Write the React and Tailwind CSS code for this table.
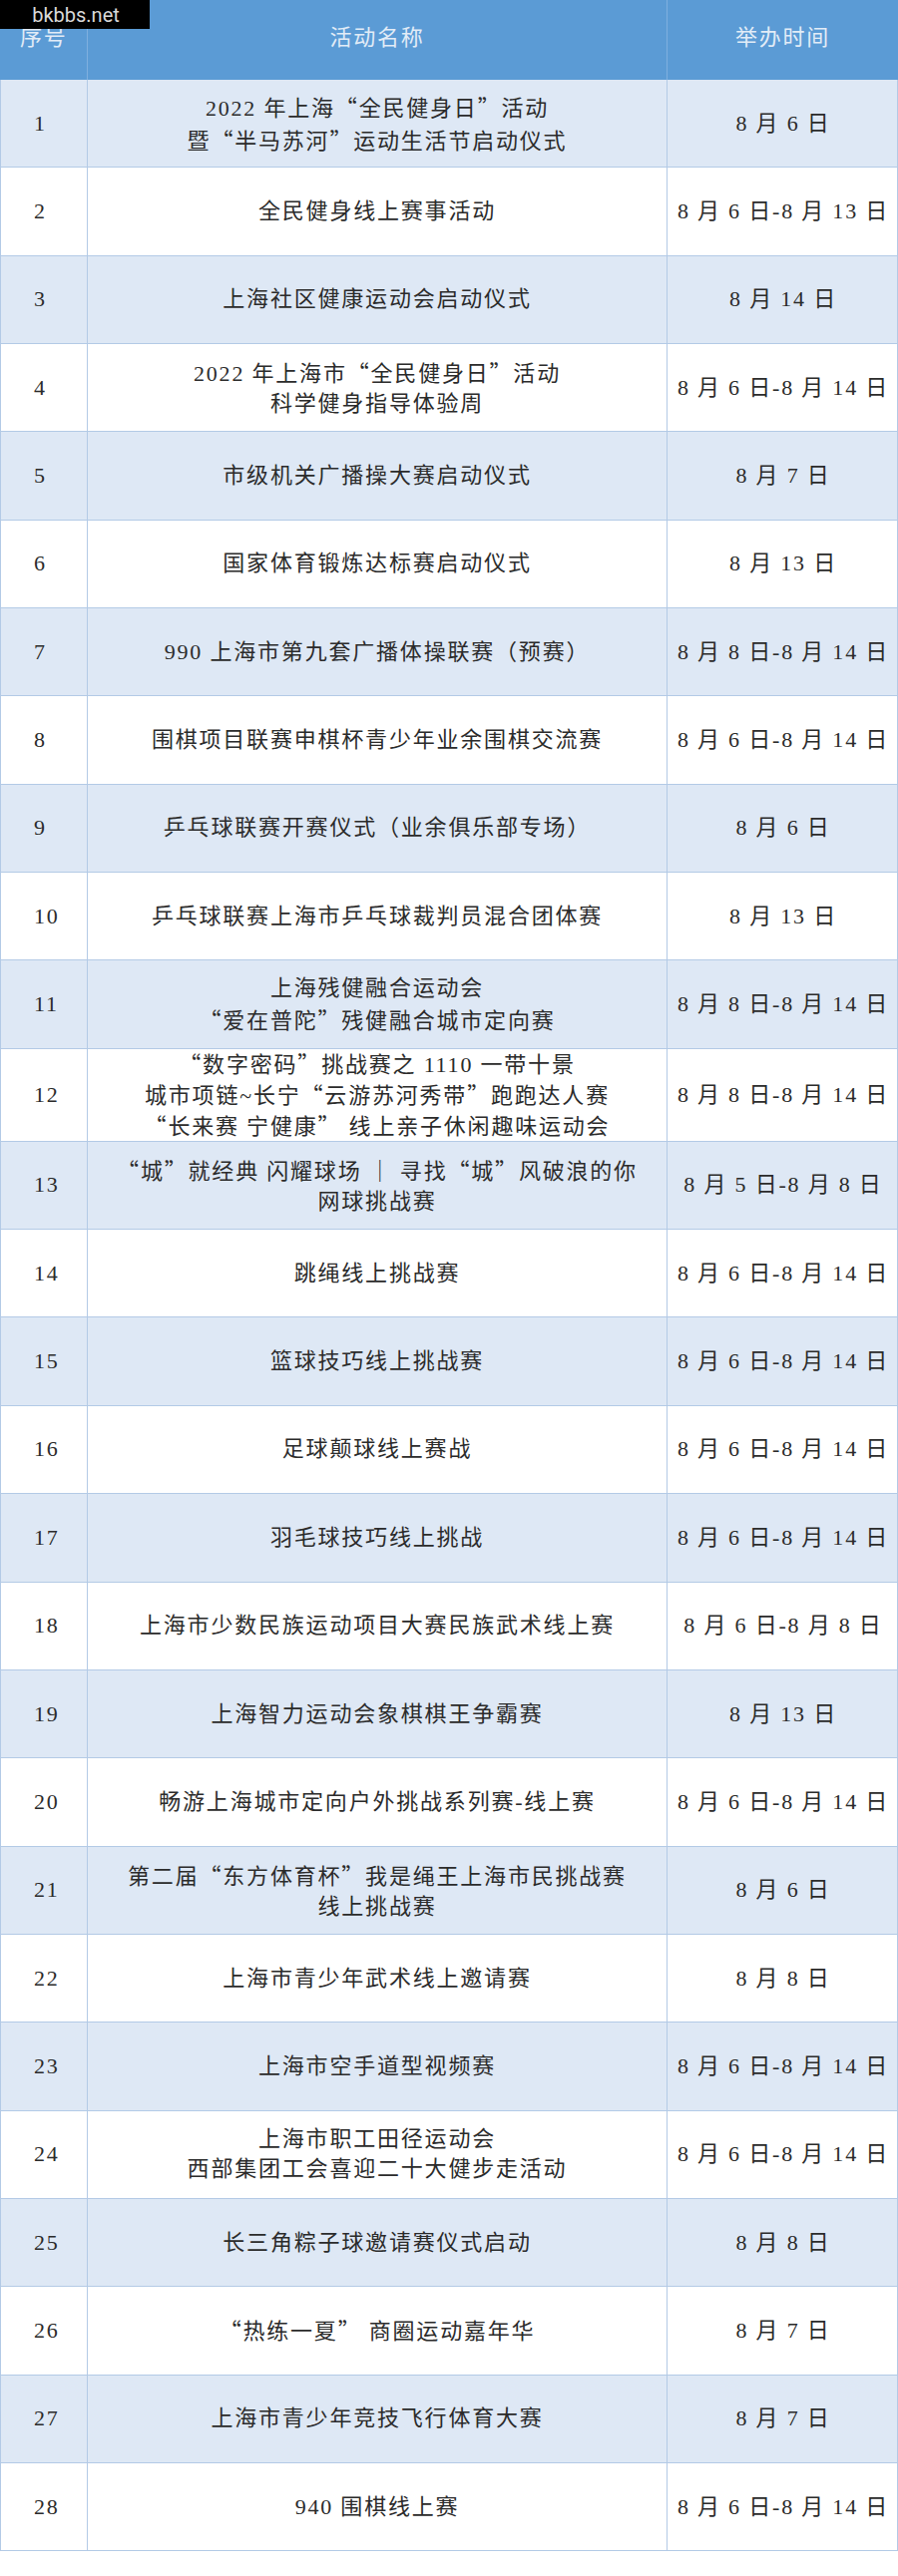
import React from "react";

const rows = [
  [["2022 年上海“全民健身日”活动", "暨“半马苏河”运动生活节启动仪式"], "8 月 6 日"],
  [["全民健身线上赛事活动"], "8 月 6 日-8 月 13 日"],
  [["上海社区健康运动会启动仪式"], "8 月 14 日"],
  [["2022 年上海市“全民健身日”活动", "科学健身指导体验周"], "8 月 6 日-8 月 14 日"],
  [["市级机关广播操大赛启动仪式"], "8 月 7 日"],
  [["国家体育锻炼达标赛启动仪式"], "8 月 13 日"],
  [["990 上海市第九套广播体操联赛（预赛）"], "8 月 8 日-8 月 14 日"],
  [["围棋项目联赛申棋杯青少年业余围棋交流赛"], "8 月 6 日-8 月 14 日"],
  [["乒乓球联赛开赛仪式（业余俱乐部专场）"], "8 月 6 日"],
  [["乒乓球联赛上海市乒乓球裁判员混合团体赛"], "8 月 13 日"],
  [["上海残健融合运动会", "“爱在普陀”残健融合城市定向赛"], "8 月 8 日-8 月 14 日"],
  [
    ["“数字密码”挑战赛之 1110 一带十景", "城市项链~长宁“云游苏河秀带”跑跑达人赛", "“长来赛 宁健康” 线上亲子休闲趣味运动会"],
    "8 月 8 日-8 月 14 日",
  ],
  [["“城”就经典 闪耀球场 ｜ 寻找“城”风破浪的你", "网球挑战赛"], "8 月 5 日-8 月 8 日"],
  [["跳绳线上挑战赛"], "8 月 6 日-8 月 14 日"],
  [["篮球技巧线上挑战赛"], "8 月 6 日-8 月 14 日"],
  [["足球颠球线上赛战"], "8 月 6 日-8 月 14 日"],
  [["羽毛球技巧线上挑战"], "8 月 6 日-8 月 14 日"],
  [["上海市少数民族运动项目大赛民族武术线上赛"], "8 月 6 日-8 月 8 日"],
  [["上海智力运动会象棋棋王争霸赛"], "8 月 13 日"],
  [["畅游上海城市定向户外挑战系列赛-线上赛"], "8 月 6 日-8 月 14 日"],
  [["第二届“东方体育杯”我是绳王上海市民挑战赛", "线上挑战赛"], "8 月 6 日"],
  [["上海市青少年武术线上邀请赛"], "8 月 8 日"],
  [["上海市空手道型视频赛"], "8 月 6 日-8 月 14 日"],
  [["上海市职工田径运动会", "西部集团工会喜迎二十大健步走活动"], "8 月 6 日-8 月 14 日"],
  [["长三角粽子球邀请赛仪式启动"], "8 月 8 日"],
  [["“热练一夏” 商圈运动嘉年华"], "8 月 7 日"],
  [["上海市青少年竞技飞行体育大赛"], "8 月 7 日"],
  [["940 围棋线上赛"], "8 月 6 日-8 月 14 日"],
];

// curly quotes come out full width from the CJK font
const Line = ({ text }) => {
  const parts = text.split(/([“”])/);
  return (
    <div>
      {parts.map((p, i) =>
        p === "“" || p === "”" ? (
          <span key={i} className="font-['Noto_Sans_CJK_SC',sans-serif]">
            {p}
          </span>
        ) : (
          <span key={i}>{p}</span>
        )
      )}
    </div>
  );
};

export default function App() {
  return (
    <div className="relative w-[900px] min-h-[2583px] bg-white font-['Liberation_Serif','Noto_Sans_CJK_SC',serif] text-[22px] text-[#2b2b2b] tracking-[1.8px]">
      <div className="absolute left-0 top-0 flex h-[29px] w-[150px] items-center justify-center bg-black pl-[2px] font-['Roboto',sans-serif] text-[20px] tracking-normal text-[#d9d9d9]">
        bkbbs.net
      </div>

      <div className="flex h-[80px] bg-[#5b9bd5] text-[#e2ecf7] leading-[30px]">
        <div className="w-[88px] border-r border-[#7fb0df] pl-[20px] pt-[23px]">序号</div>
        <div className="w-[581px] border-r border-[#7fb0df] pt-[23px] text-center">活动名称</div>
        <div className="w-[231px] pt-[23px] text-center">举办时间</div>
      </div>

      {rows.map(([lines, date], i) => (
        <div
          key={i}
          className={`flex border-b border-[#b3cae6] ${i % 2 === 0 ? "bg-[#dee8f5]" : "bg-white"} ${
            i === 11 ? "h-[93px] leading-[28px]" : "h-[88.35px] leading-[30px]"
          }`}
        >
          <div className="flex w-[88px] items-center border-x border-[#b3cae6] pl-[33px]">{i + 1}</div>
          <div className="flex w-[581px] flex-col items-center justify-center border-r border-[#b3cae6] text-center">
            {lines.map((l, j) => (
              <Line key={j} text={l} />
            ))}
          </div>
          <div className="flex w-[231px] items-center justify-center border-r border-[#b3cae6] pl-[2px]">{date}</div>
        </div>
      ))}
    </div>
  );
}
